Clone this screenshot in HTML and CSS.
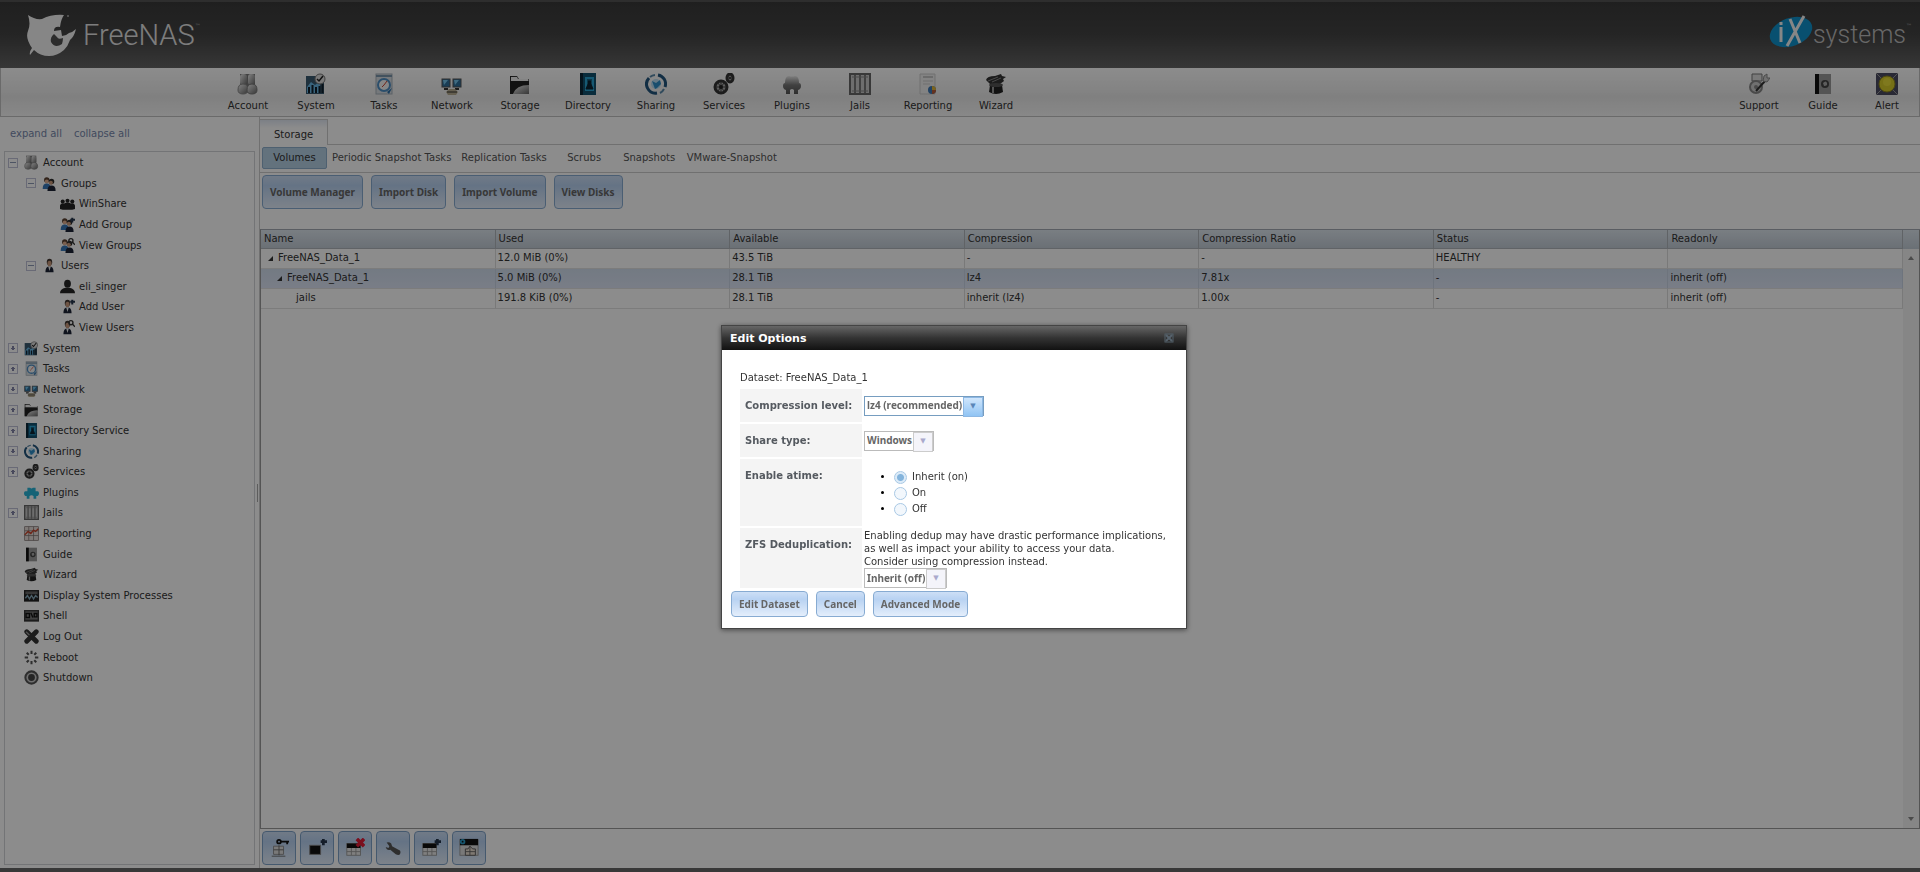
FILE: index.html
```html
<!DOCTYPE html>
<html lang="en">
<head>
    <meta charset="UTF-8">
    <meta name="viewport" content="width=device-width, initial-scale=1.0">
    <title>FreeNAS</title>
    <link rel="stylesheet" href="styles.css">
</head>
<body>
    <!-- icon set -->
    <svg class="sprite" aria-hidden="true">
        <defs>
            <linearGradient id="gray" x1="0" y1="0" x2="1" y2="1"><stop offset="0" stop-color="#f0f0f0"/><stop offset="1" stop-color="#666"/></linearGradient>
            <linearGradient id="fold" x1="0" y1="0" x2="1" y2="1"><stop offset="0" stop-color="#222"/><stop offset="1" stop-color="#aaa"/></linearGradient>
            <linearGradient id="plug" x1="0" y1="0" x2="0" y2="1"><stop offset="0" stop-color="#e6e6e6"/><stop offset="0.5" stop-color="#777"/><stop offset="1" stop-color="#555"/></linearGradient>
        </defs>
        <symbol id="account" viewBox="0 0 22 22">
            <rect x="3" y="1" width="15" height="13" fill="#777"/>
            <rect x="3" y="1" width="7" height="11" rx="3" fill="url(#gray)"/><rect x="11" y="1" width="7" height="11" rx="3" fill="url(#gray)"/>
            <path d="M1 17q0-6 5-6t5 6q0 4-5 4t-5-4z" fill="url(#gray)" stroke="#888"/><path d="M10 17q0-6 5-6t5 6q0 4-5 4t-5-4z" fill="url(#gray)" stroke="#777"/>
        </symbol>
        <symbol id="system" viewBox="0 0 22 22">
            <rect x="1" y="3" width="18" height="18" fill="#3a5a70"/><path d="M2 14l4-5 4 3 5-4v12H2z" fill="#68b6e4"/>
            <path d="M4 20v-6M7.500 20v-8M11 20v-6M14.500 20v-7M17.500 20V11" stroke="#10202c" stroke-width="2"/>
            <circle cx="15" cy="6" r="5" fill="#ddd" stroke="#777"/><path d="M12 6l2 2 4-5" fill="none" stroke="#222" stroke-width="1.500"/>
        </symbol>
        <symbol id="tasks" viewBox="0 0 22 22">
            <rect x="3" y="1" width="16" height="20" fill="#d8dde2" stroke="#a5b0ba"/><path d="M3 3h16" stroke="#7b95ab" stroke-width="2"/>
            <circle cx="11" cy="12" r="6" fill="#f4f4f4" stroke="#4f8fc4" stroke-width="2"/><path d="M11 12l3-4M11 12l-2 2" stroke="#c43" fill="none"/><path d="M14 19l5-4-3 6z" fill="#2c6fa8"/>
        </symbol>
        <symbol id="network" viewBox="0 0 22 22">
            <rect x="1" y="6" width="8" height="8" fill="#2f6f9c" stroke="#555"/><rect x="12" y="6" width="8" height="8" fill="#2f6f9c" stroke="#555"/>
            <path d="M2 7h5l-4 5zM13 7h5l-4 5z" fill="#74c4ec"/><path d="M3 15h4v2H3zM14 15h4v2h-4z" fill="#333"/><path d="M5 19l3-3h6l3 3-2 3H7z" fill="#b9ad92"/><path d="M6 19h10" stroke="#333"/>
        </symbol>
        <symbol id="storage" viewBox="0 0 22 22">
            <path d="M1 3h7l2 3h10v15H1z" fill="url(#fold)"/><path d="M2 4h6l1 2h10v2H2z" fill="#eee"/><path d="M1 8h19v5Q8 12 4 21H1z" fill="#222"/><path d="M20 12v9H4q3-9 16-9z" fill="url(#gray)"/>
        </symbol>
        <symbol id="directory" viewBox="0 0 22 22">
            <rect x="3" y="0" width="16" height="22" fill="#12506e"/><rect x="3" y="0" width="3" height="22" fill="#0a2636"/><rect x="8" y="4" width="9" height="14" fill="#28a2d2"/>
            <path d="M10 7h5M11 8h3v3l2 5H9l2-5z" fill="#0b2432" stroke="#0b2432"/>
        </symbol>
        <symbol id="sharing" viewBox="0 0 22 22">
            <path d="M13 2a9 9 0 0 1 7 12M12 20A9 9 0 0 1 4 5" fill="none" stroke="#22557c" stroke-width="3"/><path d="M10 2A9 9 0 0 0 5 4M19 16a9 9 0 0 1-4 4" fill="none" stroke="#5a88a8" stroke-width="2"/>
            <circle cx="11" cy="11" r="5" fill="#b8ddf2"/><path d="M7 8l4 2 4-3 1 4-4 4-2 1z" fill="#2f8fc8"/>
        </symbol>
        <symbol id="services" viewBox="0 0 22 22">
            <circle cx="8" cy="14" r="6" fill="#aaa" stroke="#333" stroke-width="3"/>
            <path d="M8 9v10M3 14h10M5 10l6 8M11 10l-6 8" stroke="#444"/><circle cx="8" cy="14" r="2" fill="#222"/>
            <ellipse cx="17" cy="5" rx="3" ry="4" fill="#999" stroke="#333" stroke-width="3"/><circle cx="17" cy="5" r="1" fill="#222"/>
        </symbol>
        <symbol id="plugins" viewBox="0 0 22 22">
            <path d="M4 10q0-7 4-7 3 1 6 0 4 0 4 7 2 0 2 3t-3 4v4h-4v-4q-2-2-4 0v4H5v-4q-3-1-3-4t2-3z" fill="url(#plug)"/>
        </symbol>
        <symbol id="plugins-blue" viewBox="0 0 22 22">
            <path d="M5 4h4q2 2 4 0h4v5h3q2 0 2 3t-2 4h-2v4h-4v-4q-3-2-6 0v4H4v-4H2q-2-1-2-4t2-3h3z" fill="#28b4d8"/>
        </symbol>
        <symbol id="jails" viewBox="0 0 22 22">
            <rect x="1" y="1" width="20" height="20" fill="#c8c8c8" stroke="#666" stroke-width="2"/><path d="M6 2v18M11 2v18M16 2v18" stroke="#777" stroke-width="2"/><path d="M3 4h16M3 18h16" stroke="#888"/>
        </symbol>
        <symbol id="report-page" viewBox="0 0 22 22">
            <path d="M3 1h15v20H3z" fill="#eee" stroke="#ccc"/><path d="M6 4h10" stroke="#999"/><path d="M6 8h10M6 11h7" stroke="#ccc"/>
            <circle cx="15" cy="17" r="4" fill="#3d78b4"/><path d="M15 17v-4a4 4 0 0 1 4 4z" fill="#e0b43a"/><path d="M15 17h4a4 4 0 0 1-4 4z" fill="#b85c3a"/>
        </symbol>
        <symbol id="reporting" viewBox="0 0 22 22">
            <rect x="1" y="1" width="20" height="20" fill="#e6dcd8" stroke="#776b68"/><path d="M7 1v20M14 1v20M1 7h20M1 14h20" stroke="#776b68"/><path d="M1 13l5-5 4 3 4-5 3 2 4-4" fill="none" stroke="#c8432a" stroke-width="2"/>
        </symbol>
        <symbol id="wizard" viewBox="0 0 22 22">
            <path d="M1 7q1-4 9-4l6-2 1 2 4 1-3 2 1 2-4 3H5z" fill="#333"/><path d="M3 8l10-4M7 9l9-4" stroke="#888"/><path d="M5 12h12l1 7q-7 4-14 0z" fill="#222"/><ellipse cx="11" cy="12" rx="7" ry="2" fill="#555"/><path d="M8 14v6" stroke="#999" stroke-width="2"/>
        </symbol>
        <symbol id="support" viewBox="0 0 22 22">
            <path d="M4 1h10v7H4z" fill="#ddd" stroke="#777"/><circle cx="8" cy="14" r="6" fill="#ccc" stroke="#888" stroke-width="2"/><circle cx="8" cy="14" r="2" fill="#888"/><path d="M8 18l9-10" stroke="#333" stroke-width="2"/><path d="M15 8l1-5 3-2v4h3l-3 4z" fill="#ccc" stroke="#888"/>
        </symbol>
        <symbol id="guide" viewBox="0 0 22 22">
            <rect x="3" y="1" width="16" height="20" fill="#999"/><rect x="3" y="1" width="4" height="20" fill="#111"/><circle cx="13" cy="11" r="4" fill="#444"/><path d="M11 10q3-3 4 0t-3 3z" fill="#aaa"/>
        </symbol>
        <symbol id="alert" viewBox="0 0 22 22">
            <rect width="22" height="22" fill="#4c4c62"/><path d="M0 0l22 22M22 0L0 22" stroke="#9a9a9a"/><circle cx="11" cy="11" r="8" fill="#d8cc28" stroke="#8c8420"/><circle cx="11" cy="9" r="4" fill="#e8dc38"/>
        </symbol>
        <symbol id="person" viewBox="0 0 22 22">
            <ellipse cx="11" cy="6" rx="4" ry="5" fill="#403630"/><ellipse cx="11" cy="8" rx="3" ry="4" fill="#c89a7c"/><path d="M5 21q0-9 6-9t6 9z" fill="#1c2436"/><path d="M9 12h4l-2 7z" fill="#eee"/>
        </symbol>
        <symbol id="people" viewBox="0 0 22 22">
            <circle cx="7" cy="6" r="4" fill="#5a4030"/><circle cx="7" cy="8" r="3" fill="#e0b090"/><path d="M1 19q0-8 6-8t6 8z" fill="#3a78b8"/>
            <circle cx="14" cy="8" r="4" fill="#2c2c2c"/><circle cx="13" cy="10" r="3" fill="#c89a7c"/><path d="M8 22q0-8 6-8t6 8z" fill="#1c2436"/>
        </symbol>
        <symbol id="plus" viewBox="0 0 22 22"><path d="M18 1v7M15 4h7" stroke="#26364c" stroke-width="3"/></symbol>
        <symbol id="glass" viewBox="0 0 22 22"><circle cx="16" cy="4" r="3" fill="none" stroke="#333" stroke-width="2"/><path d="M18 6l4 4" stroke="#333" stroke-width="2"/></symbol>
        <symbol id="group" viewBox="0 0 22 22">
            <circle cx="4" cy="8" r="3" fill="#262626"/><circle cx="11" cy="7" r="3" fill="#262626"/><circle cx="18" cy="8" r="3" fill="#262626"/><path d="M0 19v-5q1-4 6-3 5-3 10 0 5-1 6 3v5l-4 1H4z" fill="#262626"/>
        </symbol>
        <symbol id="user" viewBox="0 0 22 22"><ellipse cx="11" cy="7" rx="5" ry="6" fill="#262626"/><path d="M0 21q0-6 8-8h6q8 2 8 8z" fill="#262626"/></symbol>
        <symbol id="processes" viewBox="0 0 22 22"><rect y="3" width="22" height="17" fill="#222"/><rect x="2" y="5" width="18" height="4" fill="#666"/><path d="M2 15l3-4 3 5 3-5 3 5 3-5 3 3" fill="none" stroke="#8ab" stroke-width="2"/></symbol>
        <symbol id="shell" viewBox="0 0 22 22"><rect y="3" width="22" height="17" fill="#333"/><rect x="2" y="5" width="18" height="12" fill="#777"/><path d="M3 8h5v6H3zM10 7l3 7M15 8h4v5h-4z" fill="none" stroke="#111" stroke-width="2"/></symbol>
        <symbol id="logout" viewBox="0 0 22 22"><path d="M4 4l14 14M18 4L4 18" stroke="#333" stroke-width="7" stroke-linecap="round"/><path d="M3 4l5 5" stroke="#999" stroke-width="2"/></symbol>
        <symbol id="reboot" viewBox="0 0 22 22"><path d="M11 1v5M11 16v5M1 11h5M16 11h5M4 4l3 3M15 15l3 3M18 4l-3 3M7 15l-3 3" stroke="#555" stroke-width="3"/></symbol>
        <symbol id="shutdown" viewBox="0 0 22 22"><circle cx="11" cy="11" r="9" fill="#ccc" stroke="#555" stroke-width="3"/><circle cx="11" cy="11" r="5" fill="#444"/></symbol>
        <symbol id="lock" viewBox="0 0 22 22"><path d="M5 9h11v9H5z" fill="#ddd" stroke="#888"/><path d="M11 8v11M5 13h11M3 20h15" stroke="#666"/><circle cx="11" cy="4" r="2" fill="none" stroke="#111" stroke-width="2"/><path d="M13 4h9M20 4v3" stroke="#111" stroke-width="2"/></symbol>
        <symbol id="dataset" viewBox="0 0 22 22"><rect x="3" y="8" width="12" height="10" fill="#111" stroke="#888"/></symbol>
        <symbol id="grid" viewBox="0 0 22 22"><rect x="2" y="6" width="15" height="13" fill="#e8e8e8" stroke="#999"/><path d="M2 15h15M7 10v9M12 10v9" stroke="#999"/><rect x="2" y="6" width="15" height="5" fill="#111"/></symbol>
        <symbol id="cross" viewBox="0 0 22 22"><path d="M13 1l8 8M21 1l-8 8" stroke="#e01c38" stroke-width="4"/></symbol>
        <symbol id="wrench" viewBox="0 0 22 22"><path d="M4 5q3-1 5 1l1 3 7 4q3 1 2 4t-5 1l-6-5q-4 1-5-3l3 1 1-2z" fill="#555"/></symbol>
        <symbol id="snapshot" viewBox="0 0 22 22"><rect x="1" y="2" width="20" height="17" fill="#ddd" stroke="#999"/><rect x="1" y="1" width="20" height="7" fill="#111"/><circle cx="4" cy="4" r="2" fill="none" stroke="#2a9cc8" stroke-width="2"/><path d="M7 19v-7h3l2-3 3 3h3v7z" fill="#e8dcd0" stroke="#555"/><path d="M12 9v10M7 15h11" stroke="#666"/></symbol>
    </svg>

    <header class="header">
        <div class="logo">
            <svg class="shark" viewBox="0 0 50 42" role="img" aria-label="FreeNAS shark">
                <path d="M1 1q7 5 14 4Q25 0 37 1q-3 4-4 12-6-1-6 4l7-1 1 6q4 0 7-3 4-1 7-4-2 8-6 11-2 6-6 10-7 6-15 6-9 0-15-6l-4 5q-1-3 2-7Q-2 24 1 17 4 10 1 1z" fill="#f4f4f4"/>
                <path d="M27 20q-4 3-3 8 4 7 11 2 1-4 1-6-5 2-6-1z" fill="#505050"/>
                <circle cx="41" cy="2" r="1" fill="#aaa"/>
            </svg>
            <span class="logo-text">FreeNAS</span><span class="tm">™</span>
        </div>
        <div class="logo">
            <svg class="ix" viewBox="0 0 44 34" role="img" aria-label="iX">
                <ellipse cx="22" cy="17" rx="22" ry="14" transform="rotate(-20 22 17)" fill="#1093cc"/>
                <path d="M12 12v15M12 7v3M21 4l10 24M35 1L18 31" fill="none" stroke="#f4f4f4" stroke-width="3"/>
            </svg>
            <span class="logo-text systems">systems</span><span class="tm">™</span>
        </div>
    </header>

    <nav class="toolbar">
        <div class="toolbar-main">
            <button type="button" class="tool"><svg><use href="#account"/></svg>Account</button>
            <button type="button" class="tool"><svg><use href="#system"/></svg>System</button>
            <button type="button" class="tool"><svg><use href="#tasks"/></svg>Tasks</button>
            <button type="button" class="tool"><svg><use href="#network"/></svg>Network</button>
            <button type="button" class="tool"><svg><use href="#storage"/></svg>Storage</button>
            <button type="button" class="tool"><svg><use href="#directory"/></svg>Directory</button>
            <button type="button" class="tool"><svg><use href="#sharing"/></svg>Sharing</button>
            <button type="button" class="tool"><svg><use href="#services"/></svg>Services</button>
            <button type="button" class="tool"><svg><use href="#plugins"/></svg>Plugins</button>
            <button type="button" class="tool"><svg><use href="#jails"/></svg>Jails</button>
            <button type="button" class="tool"><svg><use href="#report-page"/></svg>Reporting</button>
            <button type="button" class="tool"><svg><use href="#wizard"/></svg>Wizard</button>
        </div>
        <div class="toolbar-side">
            <button type="button" class="tool"><svg><use href="#support"/></svg>Support</button>
            <button type="button" class="tool"><svg><use href="#guide"/></svg>Guide</button>
            <button type="button" class="tool"><svg><use href="#alert"/></svg>Alert</button>
        </div>
    </nav>

    <div class="content">
        <aside class="sidebar">
            <div class="tree-links"><a href="#">expand all</a><a href="#">collapse all</a></div>
            <ul class="tree">
                <li><i class="toggle open"></i><svg><use href="#account"/></svg>Account</li>
                <li class="level2"><i class="toggle open"></i><svg><use href="#people"/></svg>Groups</li>
                <li class="level3"><i class="toggle none"></i><svg><use href="#group"/></svg>WinShare</li>
                <li class="level3"><i class="toggle none"></i><svg><use href="#people"/><use href="#plus"/></svg>Add Group</li>
                <li class="level3"><i class="toggle none"></i><svg><use href="#people"/><use href="#glass"/></svg>View Groups</li>
                <li class="level2"><i class="toggle open"></i><svg><use href="#person"/></svg>Users</li>
                <li class="level3"><i class="toggle none"></i><svg><use href="#user"/></svg>eli_singer</li>
                <li class="level3"><i class="toggle none"></i><svg><use href="#person"/><use href="#plus"/></svg>Add User</li>
                <li class="level3"><i class="toggle none"></i><svg><use href="#person"/><use href="#glass"/></svg>View Users</li>
                <li><i class="toggle"></i><svg><use href="#system"/></svg>System</li>
                <li><i class="toggle"></i><svg><use href="#tasks"/></svg>Tasks</li>
                <li><i class="toggle"></i><svg><use href="#network"/></svg>Network</li>
                <li><i class="toggle"></i><svg><use href="#storage"/></svg>Storage</li>
                <li><i class="toggle"></i><svg><use href="#directory"/></svg>Directory Service</li>
                <li><i class="toggle"></i><svg><use href="#sharing"/></svg>Sharing</li>
                <li><i class="toggle"></i><svg><use href="#services"/></svg>Services</li>
                <li><i class="toggle none"></i><svg><use href="#plugins-blue"/></svg>Plugins</li>
                <li><i class="toggle"></i><svg><use href="#jails"/></svg>Jails</li>
                <li><i class="toggle none"></i><svg><use href="#reporting"/></svg>Reporting</li>
                <li><i class="toggle none"></i><svg><use href="#guide"/></svg>Guide</li>
                <li><i class="toggle none"></i><svg><use href="#wizard"/></svg>Wizard</li>
                <li><i class="toggle none"></i><svg><use href="#processes"/></svg>Display System Processes</li>
                <li><i class="toggle none"></i><svg><use href="#shell"/></svg>Shell</li>
                <li><i class="toggle none"></i><svg><use href="#logout"/></svg>Log Out</li>
                <li><i class="toggle none"></i><svg><use href="#reboot"/></svg>Reboot</li>
                <li><i class="toggle none"></i><svg><use href="#shutdown"/></svg>Shutdown</li>
            </ul>
        </aside>
        <div class="splitter"><span></span></div>

        <main class="main">
            <div class="tabs"><button type="button" class="tab">Storage</button></div>
            <div class="subtabs">
                <button type="button" class="subtab active">Volumes</button>
                <button type="button" class="subtab">Periodic Snapshot Tasks</button>
                <button type="button" class="subtab">Replication Tasks</button>
                <button type="button" class="subtab">Scrubs</button>
                <button type="button" class="subtab">Snapshots</button>
                <button type="button" class="subtab">VMware-Snapshot</button>
            </div>
            <div class="actions">
                <button type="button" class="button">Volume Manager</button>
                <button type="button" class="button">Import Disk</button>
                <button type="button" class="button">Import Volume</button>
                <button type="button" class="button">View Disks</button>
            </div>
            <div class="grid">
                <div class="grid-body">
                    <table class="volumes">
                        <thead>
                            <tr><th>Name</th><th>Used</th><th>Available</th><th>Compression</th><th>Compression Ratio</th><th>Status</th><th>Readonly</th></tr>
                        </thead>
                        <tbody>
                            <tr><td><i class="arrow"></i>FreeNAS_Data_1</td><td>12.0 MiB (0%)</td><td>43.5 TiB</td><td>-</td><td>-</td><td>HEALTHY</td><td></td></tr>
                            <tr class="selected"><td class="indent1"><i class="arrow"></i>FreeNAS_Data_1</td><td>5.0 MiB (0%)</td><td>28.1 TiB</td><td>lz4</td><td>7.81x</td><td>-</td><td>inherit (off)</td></tr>
                            <tr><td class="indent2">jails</td><td>191.8 KiB (0%)</td><td>28.1 TiB</td><td>inherit (lz4)</td><td>1.00x</td><td>-</td><td>inherit (off)</td></tr>
                        </tbody>
                    </table>
                </div>
                <div class="scroll"><div class="scroll-head"></div><div class="scroll-track"><i class="up"></i><i class="down"></i></div></div>
            </div>
            <div class="bottom-bar">
                <button type="button" class="button icon" aria-label="Change Permissions"><svg><use href="#lock"/></svg></button>
                <button type="button" class="button icon" aria-label="Create Snapshot"><svg><use href="#dataset"/><use href="#plus"/></svg></button>
                <button type="button" class="button icon" aria-label="Destroy Dataset"><svg><use href="#grid"/><use href="#cross"/></svg></button>
                <button type="button" class="button icon" aria-label="Edit Options"><svg><use href="#wrench"/></svg></button>
                <button type="button" class="button icon" aria-label="Create Dataset"><svg><use href="#grid"/><use href="#plus"/></svg></button>
                <button type="button" class="button icon" aria-label="Create zvol"><svg><use href="#snapshot"/></svg></button>
            </div>
        </main>
    </div>
    <footer class="footer"></footer>

    <div class="underlay"></div>

    <div class="dialog" role="dialog" aria-labelledby="dialog-title">
        <div class="dialog-title">
            <span id="dialog-title">Edit Options</span>
            <button type="button" class="close" aria-label="Close"><svg viewBox="0 0 10 10"><rect x="1" y="1" width="8" height="8" fill="none" stroke="#53606a"/><path d="M2 2l6 6M8 2L2 8" stroke="#56626c" stroke-width="2"/></svg></button>
        </div>
        <form class="dialog-body">
            <p>Dataset: FreeNAS_Data_1</p>
            <table class="fields">
                <tr>
                    <th><label for="compression">Compression level:</label></th>
                    <td><span class="select focused"><select id="compression"><option>lz4 (recommended)</option></select></span></td>
                </tr>
                <tr>
                    <th><label for="share-type">Share type:</label></th>
                    <td><span class="select"><select id="share-type"><option>Windows</option></select></span></td>
                </tr>
                <tr>
                    <th>Enable atime:</th>
                    <td>
                        <ul class="radios">
                            <li><label><input type="radio" name="atime" checked>Inherit (on)</label></li>
                            <li><label><input type="radio" name="atime">On</label></li>
                            <li><label><input type="radio" name="atime">Off</label></li>
                        </ul>
                    </td>
                </tr>
                <tr>
                    <th><label for="dedup">ZFS Deduplication:</label></th>
                    <td>
                        <div class="hint">Enabling dedup may have drastic performance implications,<br>as well as impact your ability to access your data.<br>Consider using compression instead.</div>
                        <span class="select"><select id="dedup"><option>Inherit (off)</option></select></span>
                    </td>
                </tr>
            </table>
            <div class="dialog-buttons">
                <button type="button" class="button">Edit Dataset</button>
                <button type="button" class="button">Cancel</button>
                <button type="button" class="button">Advanced Mode</button>
            </div>
        </form>
    </div>
</body>
</html>
```

FILE: styles.css
```css
* {
    box-sizing: border-box;
}
body {
    margin: 0;
    height: 100vh;
    display: flex;
    flex-direction: column;
    overflow: hidden;
    background: #fff;
    color: #333;
    font-family: "DejaVu Sans", Verdana, sans-serif;
    font-size: 10px;
    line-height: 13px;
}
button, select, input {
    font: inherit;
    color: inherit;
    margin: 0;
}
ul {
    list-style: none;
    margin: 0;
    padding: 0;
}
.sprite {
    position: absolute;
    width: 0;
    height: 0;
}

/* header */
.header {
    display: flex;
    justify-content: space-between;
    align-items: center;
    flex: none;
    height: 68px;
    padding: 0 8px 0 27px;
    border-top: 2px solid #555;
    background: linear-gradient(#3a3a3a, #444 50%, #646464);
}
.logo {
    display: flex;
    align-items: center;
}
.shark {
    width: 50px;
    height: 42px;
    margin-right: 6px;
}
.ix {
    width: 44px;
    height: 34px;
    margin-bottom: 6px;
}
.logo-text {
    font-family: Roboto, sans-serif;
    font-weight: 300;
    font-size: 29px;
    line-height: 34px;
    color: #e4e4e4;
}
.systems {
    font-size: 25px;
    color: #bdbdbd;
}
.tm {
    width: 6px;
    padding-bottom: 18px;
    font-size: 6px;
    line-height: 8px;
    color: #aaa;
}

/* toolbar */
.toolbar {
    display: flex;
    justify-content: space-between;
    flex: none;
    height: 49px;
    padding-left: 213px;
    border: 1px solid #c2c2c2;
    border-top: 0;
    background: linear-gradient(#fff, #eee 50%, #e9e9e9 60%, #f8f8f8);
}
.toolbar-main, .toolbar-side {
    display: flex;
}
.tool {
    display: flex;
    flex-direction: column;
    align-items: center;
    width: 68px;
    padding: 5px 0 0;
    border: 0;
    background: none;
}
.toolbar-side .tool {
    width: 64px;
}
.tool svg {
    width: 22px;
    height: 22px;
    margin-bottom: 4px;
}

/* left tree */
.content {
    display: flex;
    flex: 1;
    min-height: 0;
}
.sidebar {
    display: flex;
    flex-direction: column;
    width: 255px;
    padding: 10px 0 3px 4px;
}
.tree-links {
    display: flex;
    gap: 12px;
    height: 24px;
    padding-left: 6px;
}
.tree-links a {
    color: #7788ac;
    text-decoration: none;
}
.tree {
    flex: 1;
    border: 1px solid #d2d4d8;
}
.tree li {
    display: flex;
    align-items: center;
    height: 21px;
    padding-left: 3px;
}
.tree li:nth-child(5n+2), .tree li:nth-child(5n) {
    height: 20px;
}
.tree .level2 {
    padding-left: 21px;
}
.tree .level3 {
    padding-left: 39px;
}
.tree svg {
    width: 15px;
    height: 15px;
    margin: 0 4px 0 6px;
}
.toggle {
    width: 10px;
    height: 10px;
    border: 1px solid #c0c2d8;
    background: linear-gradient(#8486a8, #8486a8) center/4px 1px no-repeat, linear-gradient(#8486a8, #8486a8) center/2px 4px no-repeat;
}
.open {
    background: linear-gradient(#8c9ab4, #8c9ab4) center/6px 1px no-repeat;
}
.none {
    border: 0;
    background: none;
}
.splitter {
    display: flex;
    align-items: center;
    width: 4px;
}
.splitter span {
    width: 3px;
    height: 18px;
    border-right: 1px solid #aaa;
}

/* main pane */
.main {
    display: flex;
    flex-direction: column;
    flex: 1;
    min-width: 0;
    padding-top: 2px;
    border-left: 1px solid #ccc;
}
.tabs {
    flex: none;
    height: 26px;
    border-bottom: 1px solid #ccc;
}
.tab {
    height: 26px;
    padding: 4px 14px 0;
    border: 1px solid #ccc;
    border-left: 0;
    border-bottom: 0;
    background: linear-gradient(#e2e9f4, #fff 8px);
}
.subtabs {
    display: flex;
    flex: none;
    height: 28px;
    padding: 2px;
    border-bottom: 1px solid #ccc;
}
.subtab {
    min-width: 65px;
    height: 22px;
    padding: 0 4px 2px;
    border: 1px solid transparent;
    background: none;
    color: #555;
}
.active {
    border-color: #8fb0cc;
    border-radius: 2px;
    background: #b4cfe4;
    color: #333;
}
.actions {
    display: flex;
    gap: 8px;
    flex: none;
    height: 56px;
    padding: 2px;
}
.button {
    height: 34px;
    padding: 0 7px;
    border: 1px solid #87abd2;
    border-radius: 4px;
    background: linear-gradient(#cddff6, #b8d2f2 30%, #e4eefb);
    color: #666;
    font-family: "Noto Sans", sans-serif;
    font-weight: bold;
    white-space: nowrap;
}
.grid {
    display: flex;
    flex: 1;
    min-height: 0;
    border-top: 1px solid #a4aab2;
    border-bottom: 1px solid #999;
    border-left: 1px solid #999;
}
.grid-body {
    flex: 1;
}
.volumes {
    width: 100%;
    table-layout: fixed;
    border-collapse: separate;
    border-spacing: 0;
}
.volumes th {
    height: 19px;
    padding: 0 3px 1px;
    border-right: 1px solid #b0b4ba;
    border-bottom: 1px solid #b0b4ba;
    background: linear-gradient(#dde6ee, #c2ccd6);
    font-weight: normal;
    text-align: left;
}
.volumes td {
    height: 20px;
    padding: 0 2px 2px;
    border-right: 1px solid #ddd;
    border-bottom: 1px solid #e2e2e2;
}
.volumes .selected td {
    border-right-color: #c8d4e4;
    background: linear-gradient(#d2dfee, #dde4f6);
}
.arrow {
    display: inline-block;
    border-left: 5px solid transparent;
    border-bottom: 5px solid #333;
    margin: 0 5px;
}
.volumes .indent1 {
    padding-left: 11px;
}
.volumes .indent2 {
    padding-left: 35px;
}
.scroll {
    display: flex;
    flex-direction: column;
    width: 17px;
    border-right: 1px solid #999;
}
.scroll-head {
    height: 19px;
    background: linear-gradient(#dde6ee, #c2ccd6);
}
.scroll-track {
    display: flex;
    flex-direction: column;
    justify-content: space-between;
    align-items: center;
    flex: 1;
    padding: 7px 0;
    background: #f4f4f4;
}
.up, .down {
    border: 3px solid transparent;
}
.up {
    border-top: 0;
    border-bottom: 4px solid #888;
}
.down {
    border-bottom: 0;
    border-top: 4px solid #888;
}
.bottom-bar {
    display: flex;
    gap: 4px;
    flex: none;
    height: 39px;
    padding: 2px;
}
.icon {
    width: 34px;
    padding: 0;
    border-color: #7fa2c8;
}
.icon svg {
    display: block;
    width: 20px;
    height: 20px;
    margin: 0 auto;
}
.footer {
    flex: none;
    height: 4px;
    background: #666;
}

/* modal */
.underlay {
    position: fixed;
    inset: 0;
    background: rgba(0, 0, 0, 0.45);
}
.dialog {
    position: fixed;
    top: 325px;
    left: 721px;
    border: 1px solid #444;
    background: #fff;
    box-shadow: 0 1px 5px rgba(0, 0, 0, 0.5);
}
.dialog-title {
    display: flex;
    justify-content: space-between;
    align-items: center;
    height: 24px;
    padding: 0 12px 0 8px;
    background: linear-gradient(#666, #333 50%, #111);
    color: #fff;
    font-size: 11px;
    font-weight: bold;
}
.close {
    padding: 0;
    border: 0;
    background: none;
}
.close svg {
    display: block;
    width: 10px;
    height: 10px;
}
.dialog-body {
    padding: 21px 8px 11px 9px;
}
.dialog-body p {
    margin: 0;
    padding-left: 9px;
}
.fields {
    margin: 3px 0 0 7px;
    border-spacing: 2px;
}
.fields th {
    width: 122px;
    height: 33px;
    padding: 10px 5px 0;
    background: #f4f4f4;
    color: #555a60;
    text-align: left;
    vertical-align: top;
    white-space: nowrap;
}
.fields td {
    min-width: 312px;
    padding: 0;
}
.select {
    display: inline-block;
    position: relative;
    vertical-align: top;
}
.select select {
    display: block;
    appearance: none;
    height: 20px;
    padding: 0 20px 0 2px;
    border: 1px solid #bbb;
    border-radius: 0;
    background: #fff;
    color: #666;
    font-family: "Noto Sans", sans-serif;
    font-weight: bold;
}
/* arrow box over the right end of the select */
.select::after {
    content: "▼";
    position: absolute;
    top: 1px;
    right: 1px;
    width: 18px;
    height: 18px;
    border: 1px solid #ccc;
    background: #f4f4fa;
    color: #a9a9cc;
    font-size: 7px;
    line-height: 16px;
    text-align: center;
    pointer-events: none;
}
.focused select {
    border-color: #769dc0;
}
.focused::after {
    border-color: #8db8e4;
    background: linear-gradient(#d0e6fc, #90c4f4);
    color: #5a86b8;
}
.radios {
    list-style: disc;
    margin: 10px 0 9px;
    padding-left: 30px;
}
.radios li {
    height: 16px;
    line-height: 16px;
}
.radios li::marker {
    color: #000;
}
.radios input {
    appearance: none;
    width: 13px;
    height: 13px;
    margin-right: 5px;
    border: 1px solid #a8c8e4;
    border-radius: 50%;
    background: #f2f7fc;
    vertical-align: middle;
}
.radios input:checked {
    background: radial-gradient(#84b4dc 3px, #dcebf8 4px);
}
.hint {
    padding-top: 1px;
}
.dialog-buttons {
    display: flex;
    gap: 8px;
    padding-top: 1px;
}
.dialog-buttons .button {
    height: 26px;
}
```
